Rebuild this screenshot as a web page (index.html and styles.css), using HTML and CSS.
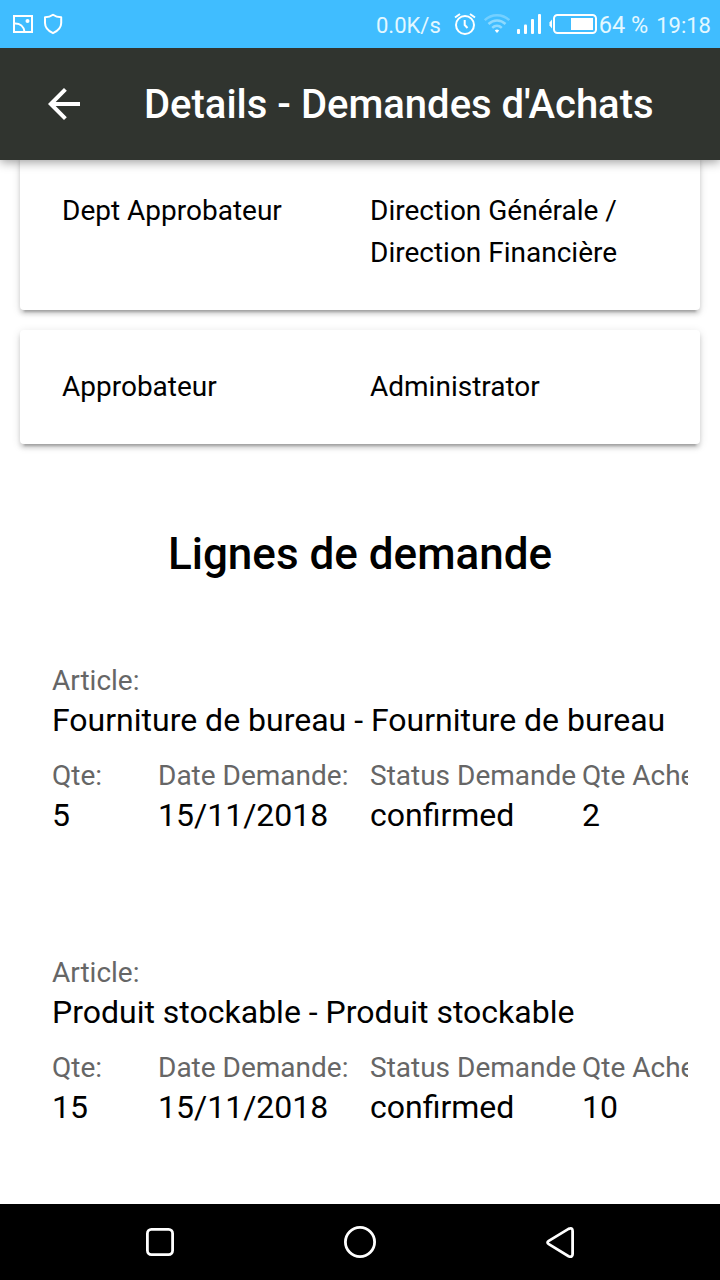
FILE: index.html
```html
<!DOCTYPE html>
<html lang="fr">
<head>
    <meta charset="UTF-8">
    <meta name="viewport" content="width=device-width, initial-scale=1.0">
    <title>Details - Demandes d'Achats</title>
    <link rel="stylesheet" href="styles.css">
</head>
<body>

    <div class="status-bar">
        <svg class="status-left" width="52" height="24" viewBox="0 0 52 24" fill="none" stroke="#fff" stroke-width="2">
            <path d="M3 4H21V20H3Z"/>
            <path d="M3 11.5C9 11 13 14.500 13.500 20"/>
            <circle cx="16.500" cy="9" r="2" fill="#fff" stroke="none"/>
            <path d="M42 2.800C39.500 4.600 37 5.200 34 5.300V11C34 15.500 37 18.800 42 21.200C47 18.800 50.200 15.500 50.200 11V5.300C47 5.200 44.500 4.600 42 2.800Z" stroke-linejoin="round"/>
        </svg>
        <span class="speed">0.0K/s</span>
        <svg class="alarm" width="24" height="24" viewBox="0 0 24 24" fill="none" stroke="#fff" stroke-width="2">
            <circle cx="12" cy="13" r="9"/>
            <path d="M11.700 8V13L14.500 16M2 5.500L7 2M22 5.500L17 2"/>
        </svg>
        <svg class="wifi" width="26" height="24" viewBox="0 0 26 24" fill="none" stroke="#8fdafe" stroke-width="2.500">
            <path d="M0.800 8.200C7.500 1.700 18.500 1.700 25.200 8.200" stroke="#74d0ff"/>
            <path d="M4.500 12C9.500 7.300 16.500 7.300 21.500 12"/>
            <path d="M8.200 15.800C11 13.200 15 13.200 17.800 15.800"/>
            <path d="M10.800 18.500Q13 16.700 15.200 18.500L13 21Z" fill="#fff" stroke="none"/>
        </svg>
        <svg class="signal" width="25" height="24" viewBox="0 0 25 24" fill="#fff">
            <rect x="0" y="17" width="3" height="5" rx="1"/>
            <rect x="7" y="12.500" width="3" height="9.500" rx="1"/>
            <rect x="14" y="7" width="3" height="15" rx="1"/>
            <rect x="21" y="2" width="3" height="20" rx="1"/>
        </svg>
        <svg class="battery" width="48" height="24" viewBox="0 0 48 24" fill="none">
            <path d="M3 7.500V16.500L0.500 13.500V10.500Z" fill="#fff"/>
            <rect x="5" y="3" width="42" height="18" rx="3.500" stroke="#fff" stroke-width="2"/>
            <rect x="22" y="6" width="22" height="12" fill="#fff"/>
        </svg>
        <span class="percent">64 %</span>
        <span class="clock">19:18</span>
    </div>

    <div class="header">
        <svg width="32" height="32" viewBox="0 0 32 32" fill="none" stroke="#fff" stroke-width="4">
            <path d="M32 16H3M17.400 1.400L2.800 16L17.400 30.600"/>
        </svg>
        <h1>Details - Demandes d'Achats</h1>
    </div>

    <div class="content">
        <div class="card">
            <div>Dept Approbateur</div>
            <div>Direction Générale / Direction Financière</div>
        </div>
        <div class="card">
            <div>Approbateur</div>
            <div>Administrator</div>
        </div>

        <h2>Lignes de demande</h2>

        <div class="line">
            <div class="article">
                <label>Article:</label>
                <p>Fourniture de bureau - Fourniture de bureau</p>
            </div>
            <div>
                <label>Qte:</label>
                <p>5</p>
            </div>
            <div>
                <label>Date Demande:</label>
                <p>15/11/2018</p>
            </div>
            <div>
                <label>Status Demande</label>
                <p>confirmed</p>
            </div>
            <div>
                <label>Qte Ache</label>
                <p>2</p>
            </div>
        </div>

        <div class="line">
            <div class="article">
                <label>Article:</label>
                <p>Produit stockable - Produit stockable</p>
            </div>
            <div>
                <label>Qte:</label>
                <p>15</p>
            </div>
            <div>
                <label>Date Demande:</label>
                <p>15/11/2018</p>
            </div>
            <div>
                <label>Status Demande</label>
                <p>confirmed</p>
            </div>
            <div>
                <label>Qte Ache</label>
                <p>10</p>
            </div>
        </div>
    </div>

    <div class="nav-bar">
        <svg width="36" height="36" viewBox="0 0 36 36"><rect x="5.400" y="5.400" width="25.200" height="25.200" rx="4"/></svg>
        <svg width="36" height="36" viewBox="0 0 36 36"><circle cx="18" cy="18" r="14.600"/></svg>
        <svg width="36" height="36" viewBox="0 0 36 36"><path d="M6.800 16.900L26.500 4.900Q30.600 3.200 30.600 7V30Q30.600 33.800 26.500 32.200L6.800 20.100Q4.300 18.500 6.800 16.900Z"/></svg>
    </div>

</body>
</html>
```

FILE: styles.css
```css
* {
    box-sizing: border-box;
}
body {
    margin: 0;
    height: 1280px;
    display: flex;
    flex-direction: column;
    overflow: hidden;
    background-color: #fff;
    color: #000;
    font-family: Roboto, sans-serif;
}
h1, h2, p {
    margin: 0;
    font-weight: 500;
}
svg {
    display: block;
    flex-shrink: 0;
}
.status-bar {
    position: relative;
    z-index: 2;
    height: 48px;
    flex-shrink: 0;
    display: flex;
    align-items: center;
    padding: 0 9px 0 11px;
    background-color: #40bdff;
    color: #e4f8ff;
    font-size: 22px;
    white-space: nowrap;
}
.speed {
    margin-left: auto;
    padding-top: 3px;
}
.alarm {
    margin-left: 12px;
}
.wifi {
    margin-left: 7px;
}
.signal {
    margin-left: 7px;
}
.battery {
    margin-left: 7px;
}
.percent {
    margin-left: 2px;
    padding-top: 2px;
    font-size: 23.5px;
}
.clock {
    margin-left: 8px;
    padding-top: 3px;
}
.header {
    position: relative;
    z-index: 1;
    height: 112px;
    flex-shrink: 0;
    display: flex;
    align-items: center;
    gap: 64px;
    padding: 0 48px;
    background-color: #30342f;
    color: #fff;
    box-shadow: 0 2px 10px rgba(0, 0, 0, 0.4);
}
.header h1 {
    font-size: 40px;
    white-space: nowrap;
}
.content {
    flex: 1;
    min-height: 0;
    overflow: hidden;
}
.card {
    display: grid;
    grid-template-columns: 1fr 1fr;
    margin: 0 20px 20px;
    padding: 36px 32px;
    border-radius: 4px;
    background-color: #fff;
    box-shadow: 0 4px 4px rgba(0, 0, 0, 0.14), 0 6px 2px -4px rgba(0, 0, 0, 0.2), 0 2px 10px rgba(0, 0, 0, 0.12);
    font-size: 28px;
    line-height: 42px;
}
.card:first-child {
    margin-top: -6px;
}
.card div {
    padding: 0 10px;
}
.content h2 {
    margin-top: 84px;
    font-size: 44px;
    line-height: 52px;
    text-align: center;
}
.line {
    display: grid;
    grid-template-columns: 106px 212px 212px 106px;
    row-gap: 16px;
    margin: 81px 32px 0 52px;
    overflow: hidden;
    white-space: nowrap;
}
.line + .line {
    margin-top: 118px;
}
.article {
    grid-column: 1 / -1;
}
.line label {
    display: block;
    color: #666;
    font-size: 28px;
    line-height: 39px;
}
.line p {
    font-size: 32px;
    font-weight: 400;
    line-height: 40px;
}
.nav-bar {
    height: 76px;
    flex-shrink: 0;
    display: flex;
    justify-content: space-between;
    align-items: center;
    padding: 0 142px;
    background-color: #000;
}
.nav-bar svg {
    fill: none;
    stroke: #fff;
    stroke-width: 2.8px;
}
```
